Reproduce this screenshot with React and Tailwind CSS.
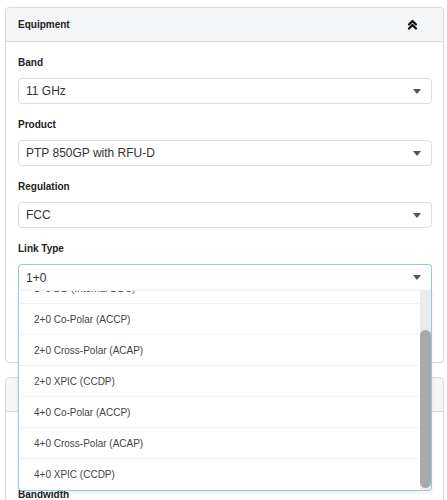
import React from "react";

// Collapsible panel with equipment selects; the link type select is open
const linkTypes = [
  "1+0 DD (Internal DDC)",
  "2+0 Co-Polar (ACCP)",
  "2+0 Cross-Polar (ACAP)",
  "2+0 XPIC (CCDP)",
  "4+0 Co-Polar (ACCP)",
  "4+0 Cross-Polar (ACAP)",
  "4+0 XPIC (CCDP)",
];

const Caret = () => (
  <svg width="8" height="5" viewBox="0 0 8 5" className="mr-[4px]">
    <path d="M0 0h8L4 5z" fill="#555" />
  </svg>
);

const ChevronsUp = () => (
  <svg width="11" height="11" viewBox="0 0 11 11" fill="none" stroke="#111" strokeWidth="2.2" strokeLinecap="round" strokeLinejoin="round">
    <path d="M2 5.5 5.5 2 9 5.5" />
    <path d="M2 9.5 5.5 6 9 9.5" />
  </svg>
);

const Field = ({ label, value, open }) => (
  <div className="mb-[13px] last:mb-0">
    <div className="h-4 text-[10px] font-bold leading-4 text-[#222]">{label}</div>
    <div className="relative mt-[7px]">
      <div
        className={
          open
            ? "flex h-[26px] items-center justify-between rounded-t-[4px] border border-b-0 border-[#8fcbe2] bg-white pl-[7px] pr-[6px] text-[12px] text-[#333]"
            : "flex h-[26px] items-center justify-between rounded-[4px] border border-[#dcdcdc] bg-white pl-[7px] pr-[6px] text-[12px] text-[#333]"
        }
      >
        <span>{value}</span>
        <Caret />
      </div>
      {open && (
        <div className="absolute left-0 right-0 top-full z-10 flex h-[201px] overflow-hidden rounded-b-[4px] border border-t-0 border-[#8fcbe2] bg-white shadow-[0_2px_4px_rgba(0,0,0,0.08)]">
          <div className="flex-1 overflow-hidden border-t border-[#f0f0f0]">
            <ul className="-mt-[18px]">
              {linkTypes.map((t) => (
                <li
                  key={t}
                  className="mx-[1px] flex h-[31px] items-center border-b border-[#f1f1f1] pl-[14px] text-[10px] text-[#444] last:border-b-0"
                >
                  {t}
                </li>
              ))}
            </ul>
          </div>
          <div className="flex w-[11px] flex-col bg-[#ebebeb]">
            <div className="mb-[2px] mt-[40px] flex-1 rounded-[6px] bg-[#a9a9a9]" />
          </div>
        </div>
      )}
    </div>
  </div>
);

const Panel = ({ title, children }) => (
  <section className="rounded-[4px] border border-[#d9d9d9] bg-white">
    <div className="flex h-[34px] items-center justify-between rounded-t-[4px] border-b border-[#dadada] bg-[#f4f5f6] pl-3 pr-[25px]">
      <h3 className="text-[10px] font-bold text-[#222]">{title}</h3>
      <ChevronsUp />
    </div>
    <div className="pb-[10px] pl-3 pr-[11px] pt-[13px]">{children}</div>
  </section>
);

export default function App() {
  return (
    <div className="min-h-[500px] bg-white pt-[7px] font-['Liberation_Sans',Arial,sans-serif]">
      <div className="ml-[5px] flex w-[439px] flex-col gap-[14px]">
        <Panel title="Equipment">
          <Field label="Band" value="11 GHz" />
          <Field label="Product" value="PTP 850GP with RFU-D" />
          <Field label="Regulation" value="FCC" />
          <Field label="Link Type" value="1+0" open />
          <Field label="Configuration" value="Standard" />
        </Panel>
        <Panel title="Channel">
          <Field label="Channel Plan" value="Standard" />
          <Field label="Bandwidth" value="40 MHz" />
        </Panel>
      </div>
    </div>
  );
}
